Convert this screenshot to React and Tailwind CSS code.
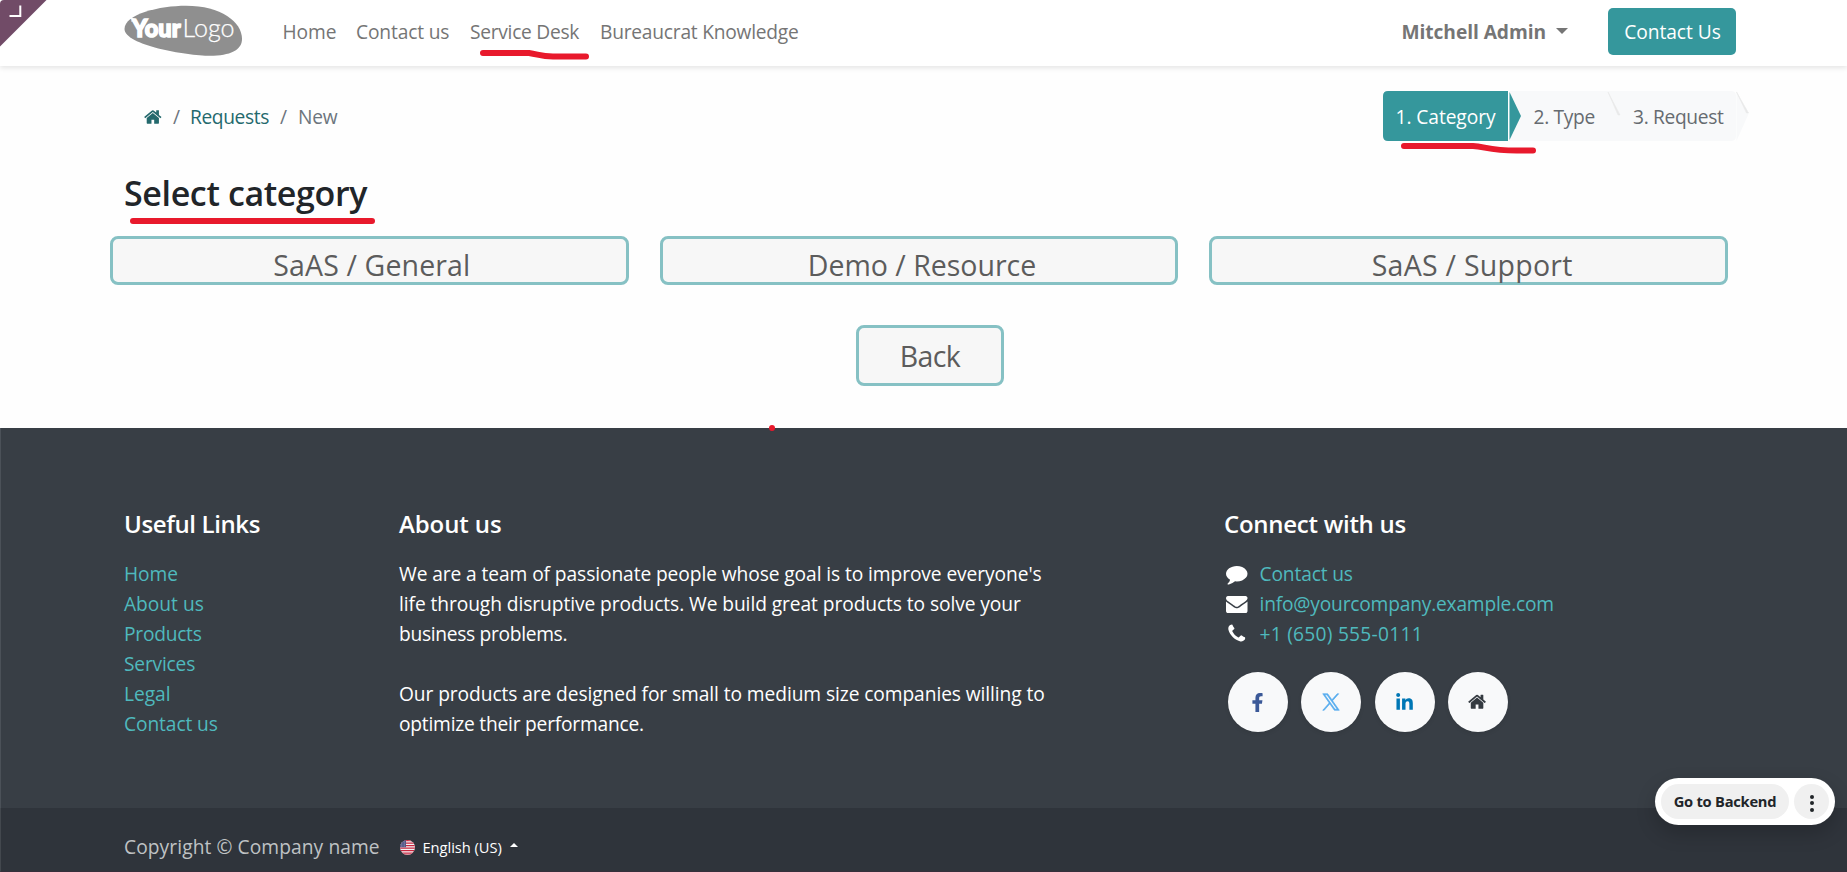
import React from 'react';
import { FaFacebookF, FaLinkedinIn } from 'react-icons/fa';

const HOME_D =
  'M1408 992v480q0 26-19 45t-45 19h-384v-384h-256v384h-384q-26 0-45-19t-19-45v-480q0-1 .5-3t.5-3l575-474 575 474q1 2 1 6zm223-69l-62 74q-8 9-21 11h-3q-13 0-21-7l-692-577-692 577q-12 8-24 7-13-2-21-11l-62-74q-8-10-7-23.500t11-21.500l719-599q32-26 76-26t76 26l244 204v-195q0-14 9-23t23-9h192q14 0 23 9t9 23v408l219 182q10 8 11 21.500t-7 23.500z';
const COMMENT_D =
  'M1792 896q0 174-120 321.500t-326 233-450 85.500q-70 0-145-8-198 175-460 242-49 14-114 22-17 2-30.500-9t-17.500-29v-1q-3-4-.5-12t2-10 4.500-9.500l6-9 7-8.500 8-9q7-8 31-34.500t34.500-38 31-39.500 32.500-51 27-59 26-76q-157-89-247.500-220t-90.500-281q0-130 71-248.500t191-204.500 286-136.500 348-50.500q244 0 450 85.500t326 233 120 321.500z';
const ENVELOPE_D =
  'M1792 710v794q0 66-47 113t-113 47h-1472q-66 0-113-47t-47-113v-794q44 49 101 87 362 246 497 345 57 42 92.500 65.500t94.500 48 110 24.500h2q51 0 110-24.500t94.500-48 92.500-65.500q170-123 498-345 57-39 100-87zm0-294q0 79-49 151t-122 123q-376 261-468 325-10 7-42.500 31t-54 38.500-52 32.500-57.500 27-50 9h-2q-23 0-50-9t-57.500-27-52-32.500-54-38.500-42.500-31q-91-64-262-182.500t-205-142.500q-62-42-117-115.500t-55-136.500q0-78 41.500-130t118.500-52h1472q65 0 112.500 47t47.500 113z';
const PHONE_D =
  'M1600 1240q0 27-10 70.500t-21 68.500q-21 50-122 106-94 51-186 51-27 0-52.500-3.500t-57.500-12.500-47.500-14.500-55.500-20.500-49-18q-98-35-175-83-128-79-264.500-215.500t-215.500-264.500q-48-77-83-175-3-9-18-49t-20.500-55.500-14.500-47.500-12.500-57.500-3.500-52.500q0-92 51-186 56-101 106-122 25-11 68.500-21t70.500-10q14 0 21 3 18 6 53 76 11 19 30 54t35 63.500 31 53.500q3 4 17.500 25t21.500 35.500 7 28.500q0 20-28.500 50t-62 55-62 53-28.500 46q0 9 5 22.500t8.500 20.500 14 24 11.500 19q76 137 174 235t235 174q2 1 19 11.500t24 14 20.500 8.500 22.500 5q18 0 46-28.500t53-62 55-62 50-28.500q14 0 28.500 7t35.500 21.500 25 17.500q25 15 53.500 31t63.500 35 54 30q70 35 76 53 3 7 3 21z';

function Glyph({ d, className }) {
  return (
    <svg viewBox="0 0 1792 1792" className={className} fill="currentColor">
      <path d={d} />
    </svg>
  );
}

function Logo() {
  return (
    <svg width="120" height="52" viewBox="0 0 120 52" className="block">
      <path
        d="M0.500 24 C0.500 9 36 0.800 62 0.800 C97 0.800 118 17 118 34 C118 45 106 50.800 86 50.800 C62 50.800 0.500 40 0.500 24 Z"
        fill="#8f8f8f"
      />
      <path d="M5 13.500 H9.500 M7 16 H11" stroke="#fff" strokeWidth="0.800" />
      <text x="8" y="32" fill="#fff" stroke="#fff" strokeWidth="1.600" fontFamily="Lato, sans-serif" fontWeight="900" fontSize="25" textLength="48.500" lengthAdjust="spacingAndGlyphs">
        Your
      </text>
      <text x="58.500" y="32" fill="#fff" stroke="#fff" strokeWidth="0.250" fontFamily="Lato, sans-serif" fontWeight="300" fontSize="25.500" textLength="52" lengthAdjust="spacingAndGlyphs">
        Logo
      </text>
    </svg>
  );
}

function Header() {
  return (
    <header className="relative z-10 flex h-[66px] items-center bg-white pb-[3px] pl-[123.500px] pr-[111px] text-[19.200px] text-[#757575] shadow-[0_2px_5px_rgba(0,0,0,0.100)]">
      <div className="absolute left-0 top-0">
        <svg width="47" height="47" viewBox="0 0 47 47" className="block">
          <path d="M0 4 Q0 0 4 0 H46.500 L0 46.500 Z" fill="#714b67" />
          <path d="M20.300 5.500 V16 H9.500" fill="none" stroke="#fff" strokeWidth="2" />
        </svg>
      </div>
      <div className="pb-[1px]">
        <Logo />
      </div>
      <nav className="ml-[39px] flex whitespace-nowrap pt-[2px]">
        <a className="w-[73.500px] tracking-[-0.100px]">Home</a>
        <a className="w-[114px] tracking-[-0.150px]">Contact us</a>
        <a className="relative w-[130px] tracking-[-0.280px]">
          Service Desk
          <svg width="114" height="14" viewBox="0 0 114 14" className="absolute left-[6.500px] top-[31px]">
            <path d="M6 4 H52 C62 5.500 64 7.500 76 7.500 H109" fill="none" stroke="#e8192c" strokeWidth="6" strokeLinecap="round" />
          </svg>
        </a>
        <a className="tracking-[-0.230px]">Bureaucrat Knowledge</a>
      </nav>
      <div className="ml-auto flex items-center whitespace-nowrap">
        <span className="pt-[2px] font-bold tracking-[-0.070px]">Mitchell Admin</span>
        <span className="mb-[1px] ml-[10px] mr-[40px] h-0 w-0 border-x-[6px] border-t-[6px] border-x-transparent border-t-[#757575]" />
        <a className="flex h-[47px] w-[128px] items-center justify-center rounded-[5px] bg-[#35979c] pl-[1px] pt-[2px] tracking-[-0.050px] text-white">Contact Us</a>
      </div>
    </header>
  );
}

function Steps() {
  return (
    <div className="relative flex h-[50px] w-[366px] items-center whitespace-nowrap rounded-l-[5px] pt-[2px] text-[#666b70]">
      <svg width="366" height="50" viewBox="0 0 366 50" className="absolute left-0 top-0">
        <path d="M126 0 H348 Q353 0 353 5 V45 Q353 50 348 50 H126 Z" fill="#f8f9fa" />
        <path d="M353.500 0 L365.500 23 L353.500 50 Z" fill="#f8f9fa" />
        <path d="M225 1 L237 24 L235 24 Z M353.500 1 L365.500 22 L363.500 22 Z" fill="#e9eaea" stroke="#e9eaea" strokeWidth="0.600" />
        <path d="M5 0 H125 V50 H5 Q0 50 0 45 V5 Q0 0 5 0 Z" fill="#35979c" />
        <path d="M125 0 H126.500 V50 H125 Z" fill="#fff" />
        <path d="M126.500 1 L138 25 L126.500 49 Z" fill="#35979c" />
      </svg>
      <span className="relative ml-[12.500px] w-[138px] tracking-[-0.070px] text-white">1. Category</span>
      <span className="relative w-[99.500px] tracking-[-0.320px]">2. Type</span>
      <span className="relative tracking-[-0.330px]">3. Request</span>
      <svg width="144" height="16" viewBox="0 0 144 16" className="absolute left-[16px] top-[50px]">
        <path d="M5 5 H74 C86 5.500 90 9.500 118 9.500 H134" fill="none" stroke="#e8192c" strokeWidth="6" strokeLinecap="round" />
      </svg>
    </div>
  );
}

function Main() {
  return (
    <main className="h-[362px] bg-[#fefefe]">
      <div className="flex items-start justify-between pl-[144px] pr-[98px] pt-[25px] text-[19.200px]">
        <div className="flex h-[50px] items-center whitespace-nowrap pt-[2px] text-[#6c757d]">
          <Glyph d={HOME_D} className="h-[20px] w-[19px] text-[#24696d]" />
          <span className="ml-[10px]">/</span>
          <span className="ml-[10px] tracking-[-0.400px] text-[#24696d]">Requests</span>
          <span className="ml-[11px]">/</span>
          <span className="ml-[11px] tracking-[-0.200px]">New</span>
        </div>
        <Steps />
      </div>
      <h1 className="relative ml-[124px] mt-[26.500px] h-[50px] w-[260px] whitespace-nowrap text-[34px] font-semibold leading-[51px] tracking-[-0.370px] text-[#212529]">
        Select category
        <span className="absolute left-[5.500px] top-[50.500px] h-[6px] w-[245px] rounded-full bg-[#e8192c]" />
      </h1>
      <div className="ml-[110px] mt-[18.500px] grid w-[1618px] grid-cols-3 gap-[31px] whitespace-nowrap text-center text-[28.500px] leading-[53px] text-[#5c5c5c]">
        <a className="h-[49px] rounded-[8px] border-[3px] border-[#86c1c4] bg-[#f7f7f7] pl-[5px] tracking-[0.120px]">SaAS / General</a>
        <a className="h-[49px] rounded-[8px] border-[3px] border-[#86c1c4] bg-[#f7f7f7] pl-[6px]">Demo / Resource</a>
        <a className="h-[49px] rounded-[8px] border-[3px] border-[#86c1c4] bg-[#f7f7f7] pl-[7px] tracking-[0.260px]">SaAS / Support</a>
      </div>
      <a className="ml-[856px] mt-[40px] flex h-[61px] w-[148px] items-center justify-center rounded-[8px] border-[3px] border-[#86c1c4] bg-[#f7f7f7] pt-[2px] text-[28.500px] tracking-[-0.630px] text-[#5c5c5c]">
        Back
      </a>
    </main>
  );
}

function Social({ children }) {
  return (
    <a className="flex h-[60px] w-[60px] items-center justify-center rounded-full bg-[#f8f9fa] shadow-[0_2px_4px_rgba(0,0,0,0.080)]">{children}</a>
  );
}

function Footer() {
  return (
    <footer className="relative text-[19.200px] text-white">
      <span className="absolute left-[768.500px] top-[-3.500px] h-[6px] w-[6px] rounded-full bg-[#e8192c]" />
      <div className="flex h-[380px] whitespace-nowrap border-l border-[#4b5158] bg-[#383e45] pl-[123px] pt-[81px] leading-[30px]">
        <section className="w-[275px]">
          <h2 className="mb-[20px] text-[24px] font-semibold tracking-[-0.380px]">Useful Links</h2>
          <ul className="text-[#4fb9bd]">
            <li className="tracking-[-0.050px]">Home</li>
            <li className="tracking-[-0.020px]">About us</li>
            <li className="tracking-[-0.250px]">Products</li>
            <li className="tracking-[-0.200px]">Services</li>
            <li className="tracking-[-0.050px]">Legal</li>
            <li className="tracking-[-0.100px]">Contact us</li>
          </ul>
        </section>
        <section className="w-[825px]">
          <h2 className="mb-[20px] text-[24px] font-semibold tracking-[-0.100px]">About us</h2>
          <p className="mb-[30px]">
            <span className="block tracking-[-0.090px]">We are a team of passionate people whose goal is to improve everyone's</span>
            <span className="block tracking-[-0.080px]">life through disruptive products. We build great products to solve your</span>
            <span className="block tracking-[-0.310px]">business problems.</span>
          </p>
          <p>
            <span className="block tracking-[-0.085px]">Our products are designed for small to medium size companies willing to</span>
            <span className="block tracking-[-0.220px]">optimize their performance.</span>
          </p>
        </section>
        <section>
          <h2 className="mb-[20px] text-[24px] font-semibold tracking-[-0.270px]">Connect with us</h2>
          <ul className="text-[#4fb9bd]">
            <li className="flex items-center">
              <Glyph d={COMMENT_D} className="ml-[2px] mr-[12px] h-[21.500px] w-[21.500px] text-white" />
              <span className="tracking-[-0.150px]">Contact us</span>
            </li>
            <li className="flex items-center">
              <Glyph d={ENVELOPE_D} className="ml-[2px] mr-[12px] h-[21.500px] w-[21.500px] text-white" />
              <span className="tracking-[-0.200px]">info@yourcompany.example.com</span>
            </li>
            <li className="flex items-center">
              <Glyph d={PHONE_D} className="ml-[2px] mr-[12px] h-[21.500px] w-[21.500px] text-white" />
              <span className="tracking-[0.250px]">+1 (650) 555-0111</span>
            </li>
          </ul>
          <div className="ml-[3.500px] mt-[23px] flex gap-[13.500px]">
            <Social>
              <FaFacebookF className="h-[19px] w-[19px] text-[#3b5998]" />
            </Social>
            <Social>
              <svg viewBox="0 0 24 24" className="h-[18px] w-[18px]" fill="#55acee">
                <path d="M14.095 10.316 22.286 1h-1.940L13.230 9.088 7.551 1H1l8.590 12.231L1 23h1.940l7.510-8.543L16.449 23H23l-8.905-12.684Zm-2.658 3.022-.872-1.218L3.640 2.432h2.980l5.590 7.821.869 1.219 7.265 10.166h-2.982l-5.926-8.300Z" stroke="#55acee" strokeWidth="0.900" />
              </svg>
            </Social>
            <Social>
              <FaLinkedinIn className="h-[19px] w-[19px] text-[#0077b5]" />
            </Social>
            <Social>
              <Glyph d={HOME_D} className="h-[19.500px] w-[19.500px] text-[#343a40]" />
            </Social>
          </div>
        </section>
      </div>
      <div className="flex h-[64px] items-start whitespace-nowrap border-b border-l border-b-[#352f3b] border-l-[#43484e] bg-[#2f343b] pl-[123px] pt-[24px] leading-[30px]">
        <span className="w-[276px] tracking-[0.080px] text-[#bfc2c4]">Copyright © Company name</span>
        <a className="flex items-center text-[14.700px] tracking-[-0.050px]">
          <svg width="15" height="15" viewBox="0 0 15 15">
            <clipPath id="flag-round">
              <circle cx="7.500" cy="7.500" r="7.500" />
            </clipPath>
            <g clipPath="url(#flag-round)">
              <path d="M0 0H15V15H0Z" fill="#f4f4f6" />
              <path d="M0 0.600H15M0 3.100H15M0 5.600H15M0 8.100H15M0 10.600H15M0 13.100H15M0 15H15" stroke="#c8263f" strokeWidth="1.200" />
              <path d="M0 0H6V7.200H0Z" fill="#4a4f80" />
              <path d="M1 2H6M1 4H6M1 6H6" stroke="#c7c9dc" strokeWidth="0.700" strokeDasharray="0.800 0.800" />
            </g>
          </svg>
          <span className="ml-[7.500px]">English (US)</span>
          <span className="mb-[5px] ml-[8px] h-0 w-0 border-x-[4px] border-b-[4px] border-x-transparent border-b-white" />
        </a>
      </div>
      <div className="absolute bottom-[47px] right-[12px] flex h-[47px] w-[180px] items-center gap-[5px] rounded-full bg-white pl-[6px] text-[#212529] shadow-[0_8px_20px_rgba(0,0,0,0.200)]">
        <a className="flex h-[35px] w-[128px] items-center justify-center whitespace-nowrap rounded-full bg-[#f0f0f0] text-[14.700px] font-bold tracking-[-0.250px]">Go to Backend</a>
        <a className="flex h-[35px] w-[35px] flex-col items-center justify-center gap-[2.500px] rounded-full bg-[#f0f0f0] pt-[3px]">
          <span className="h-[4px] w-[4px] rounded-full bg-[#212529]" />
          <span className="h-[4px] w-[4px] rounded-full bg-[#212529]" />
          <span className="h-[4px] w-[4px] rounded-full bg-[#212529]" />
        </a>
      </div>
    </footer>
  );
}

export default function App() {
  return (
    <div className="h-[872px] w-[1847px] overflow-hidden bg-white font-['Open_Sans',sans-serif]">
      <Header />
      <Main />
      <Footer />
    </div>
  );
}
